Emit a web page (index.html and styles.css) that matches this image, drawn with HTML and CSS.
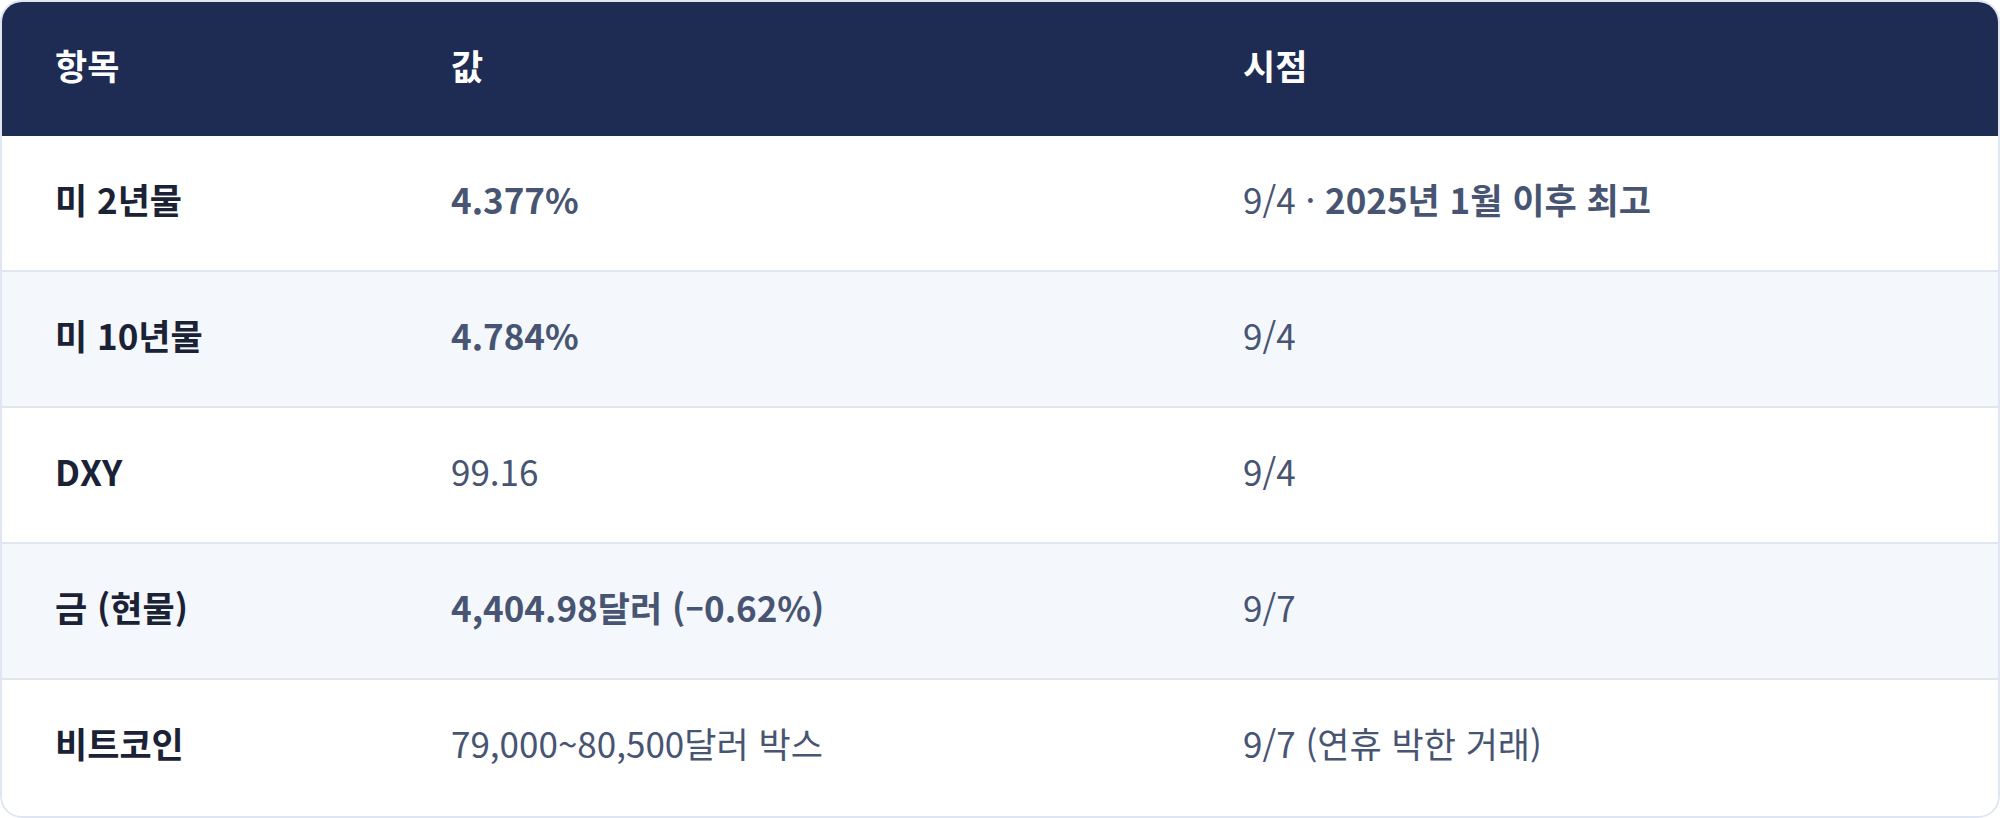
FILE: index.html
```html
<!DOCTYPE html>
<html lang="ko">
<head>
<meta charset="utf-8">
<title>시장 지표</title>
<link rel="stylesheet" href="styles.css">
</head>
<body>
<div class="card">
  <div class="row head">
    <div class="cell"><span>항목</span></div>
    <div class="cell"><span>값</span></div>
    <div class="cell"><span>시점</span></div>
  </div>
  <div class="row">
    <div class="cell name"><span>미 2년물</span></div>
    <div class="cell val"><span><b>4.377%</b></span></div>
    <div class="cell val"><span>9/4 · <b>2025년 1월 이후 최고</b></span></div>
  </div>
  <div class="row alt">
    <div class="cell name"><span>미 10년물</span></div>
    <div class="cell val"><span><b>4.784%</b></span></div>
    <div class="cell val"><span>9/4</span></div>
  </div>
  <div class="row">
    <div class="cell name"><span>DXY</span></div>
    <div class="cell val"><span>99.16</span></div>
    <div class="cell val"><span>9/4</span></div>
  </div>
  <div class="row alt">
    <div class="cell name"><span>금 (현물)</span></div>
    <div class="cell val"><span><b>4,404.98달러 (–0.62%)</b></span></div>
    <div class="cell val"><span>9/7</span></div>
  </div>
  <div class="row last">
    <div class="cell name"><span>비트코인</span></div>
    <div class="cell val"><span>79,000~80,500달러 박스</span></div>
    <div class="cell val"><span>9/7 (연휴 박한 거래)</span></div>
  </div>
</div>
</body>
</html>
```

FILE: styles.css
```css
html, body {
  margin: 0;
  padding: 0;
  background: #ffffff;
}
body {
  font-family: "Noto Sans CJK KR", "Noto Sans", sans-serif;
  font-size: 35px;
  font-kerning: none;
}
.card {
  width: 2000px;
  height: 818px;
  box-sizing: border-box;
  border: 2px solid #dfe5f1;
  border-radius: 22px;
  overflow: hidden;
  background: #ffffff;
}
.row {
  display: grid;
  grid-template-columns: 396px 792px 1fr;
  height: 136px;
  box-sizing: border-box;
  border-bottom: 2px solid #dfe5f1;
  background: #ffffff;
}
.row.alt {
  background: #f4f7fc;
}
.row.last {
  border-bottom: none;
  height: 134px;
}
.row.head {
  height: 134px;
  border-bottom: none;
  background: #1e2b53;
  color: #ffffff;
  font-weight: 700;
}
.cell {
  display: flex;
  align-items: center;
  padding: 0 0 10px 53px;
  white-space: nowrap;
}
.cell.name {
  color: #1b2235;
  font-weight: 700;
}
.cell.val {
  color: #485572;
  font-weight: 400;
}
.cell b {
  font-weight: 700;
}
```
